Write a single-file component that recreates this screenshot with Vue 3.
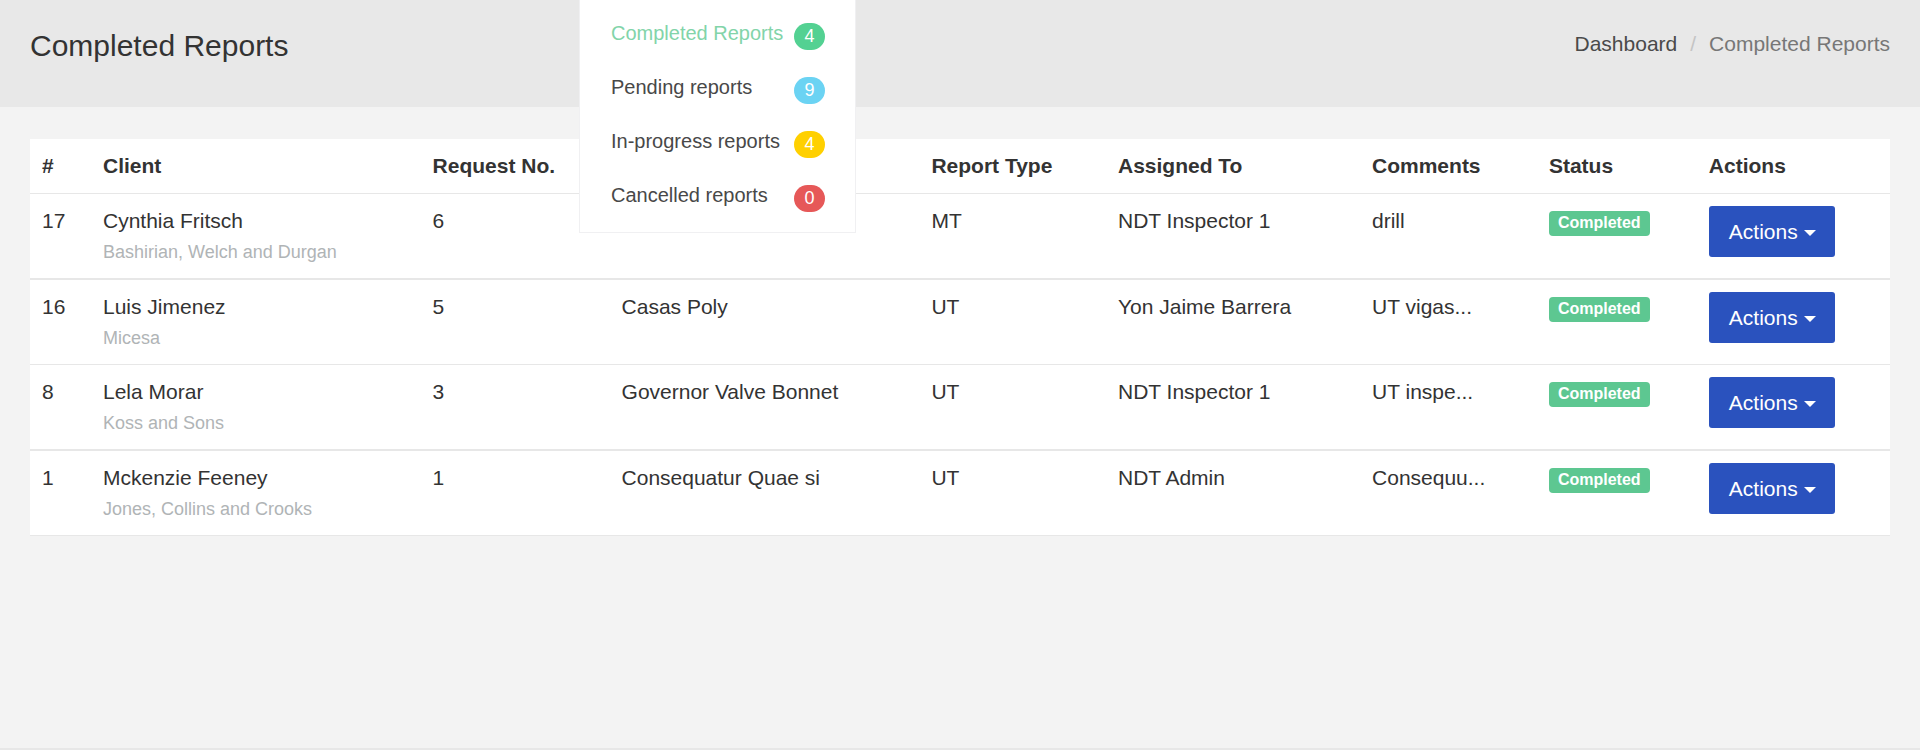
<script setup>
const menu = [
  { label: 'Completed Reports', count: 4, tone: 'green', active: true },
  { label: 'Pending reports', count: 9, tone: 'blue' },
  { label: 'In-progress reports', count: 4, tone: 'yellow' },
  { label: 'Cancelled reports', count: 0, tone: 'red' },
]

const columns = [
  { key: 'id', label: '#' },
  { key: 'client', label: 'Client' },
  { key: 'request', label: 'Request No.' },
  { key: 'project', label: '' },
  { key: 'type', label: 'Report Type' },
  { key: 'assigned', label: 'Assigned To' },
  { key: 'comments', label: 'Comments' },
  { key: 'status', label: 'Status' },
  { key: 'actions', label: 'Actions' },
]

const reports = [
  { id: 17, client: 'Cynthia Fritsch', company: 'Bashirian, Welch and Durgan', request: 6, project: '', type: 'MT', assigned: 'NDT Inspector 1', comments: 'drill' },
  { id: 16, client: 'Luis Jimenez', company: 'Micesa', request: 5, project: 'Casas Poly', type: 'UT', assigned: 'Yon Jaime Barrera', comments: 'UT vigas...' },
  { id: 8, client: 'Lela Morar', company: 'Koss and Sons', request: 3, project: 'Governor Valve Bonnet', type: 'UT', assigned: 'NDT Inspector 1', comments: 'UT inspe...' },
  { id: 1, client: 'Mckenzie Feeney', company: 'Jones, Collins and Crooks', request: 1, project: 'Consequatur Quae si', type: 'UT', assigned: 'NDT Admin', comments: 'Consequu...' },
]
</script>

<template>
  <div class="page">
    <nav class="menu" aria-label="Reports">
      <a v-for="item in menu" :key="item.label" href="#" class="menu-item" :class="{ active: item.active }">
        <span>{{ item.label }}</span>
        <span class="count" :class="item.tone">{{ item.count }}</span>
      </a>
    </nav>

    <header class="page-header">
      <h1>Completed Reports</h1>
      <nav class="breadcrumb" aria-label="Breadcrumb">
        <a href="#">Dashboard</a>
        <span class="slash">/</span>
        <span class="current">Completed Reports</span>
      </nav>
    </header>

    <main>
      <table>
        <colgroup>
          <col v-for="c in columns" :key="c.key" :class="'col-' + c.key" />
        </colgroup>
        <thead>
          <tr>
            <th v-for="c in columns" :key="c.key" scope="col">{{ c.label }}</th>
          </tr>
        </thead>
        <tbody>
          <tr v-for="r in reports" :key="r.id">
            <td>{{ r.id }}</td>
            <td>
              <div>{{ r.client }}</div>
              <div class="company">{{ r.company }}</div>
            </td>
            <td>{{ r.request }}</td>
            <td>{{ r.project }}</td>
            <td>{{ r.type }}</td>
            <td>{{ r.assigned }}</td>
            <td>{{ r.comments }}</td>
            <td class="status-cell"><span class="status">Completed</span></td>
            <td><button type="button" class="action">Actions<span class="caret"></span></button></td>
          </tr>
        </tbody>
      </table>
    </main>

    <footer></footer>
  </div>
</template>

<style>
body {
  background: #f3f3f3;
}
</style>

<style scoped>
.page {
  position: relative;
  box-sizing: border-box;
  min-height: 100vh;
  display: flex;
  flex-direction: column;
  background: #f3f3f3;
  color: #333;
  font: 21px/30px "Liberation Sans", Arial, sans-serif;
}
.page-header {
  display: flex;
  justify-content: space-between;
  align-items: flex-start;
  padding: 29px 30px 44px;
  background: #e8e8e8;
}
h1 {
  margin: 0;
  font-size: 30px;
  line-height: 34px;
  font-weight: 400;
}
.breadcrumb {
  display: flex;
  gap: 13px;
}
.breadcrumb a {
  color: #4a4a4a;
  text-decoration: none;
}
.slash {
  color: #c4c4c4;
}
.current {
  color: #777;
}
.menu {
  position: absolute;
  z-index: 1;
  top: 0;
  left: 579px;
  box-sizing: border-box;
  width: 277px;
  padding: 6px 0 10px;
  background: #fff;
  border: 1px solid #f0f0f2;
  border-top: 0;
}
.menu-item {
  display: flex;
  justify-content: space-between;
  align-items: flex-start;
  padding: 12px 30px 10px 31px;
  color: #484848;
  font-size: 20px;
  text-decoration: none;
}
.menu-item.active {
  color: #82d4a9;
}
.count {
  min-width: 31px;
  margin-top: 5px;
  border-radius: 14px;
  color: #fff;
  font-size: 18px;
  line-height: 27px;
  text-align: center;
}
.green { background: #53d192; }
.blue { background: #6bd3f3; }
.yellow { background: #ffd000; }
.red { background: #e65858; }

main {
  flex: 1;
  padding: 32px 30px;
}
table {
  width: 100%;
  table-layout: fixed;
  border-collapse: separate;
  border-spacing: 0;
  background: #fff;
}
.col-id { width: 3.28%; }
.col-client { width: 17.72%; }
.col-request { width: 10.16%; }
.col-project { width: 16.66%; }
.col-type { width: 10.03%; }
.col-assigned { width: 13.66%; }
.col-comments { width: 9.51%; }
.col-status { width: 8.6%; }

th,
td {
  padding: 12px 0 12px 12px;
  text-align: left;
  vertical-align: top;
  border-bottom: 1px solid #e7e7e7;
}
th {
  height: 30px;
}
td {
  padding-bottom: 10px;
}
tbody tr:nth-child(odd) td {
  border-bottom-width: 2px;
}
.company {
  color: #b0b4b6;
  font-size: 18px;
  line-height: 32px;
}
.status-cell {
  padding-top: 17px;
}
.status {
  display: block;
  width: max-content;
  padding: 0 9px 2px;
  border-radius: 4px;
  background: #5dc791;
  color: #fff;
  font-size: 16px;
  line-height: 23px;
  font-weight: 700;
}
.action {
  display: flex;
  align-items: center;
  gap: 6px;
  padding: 11px 19px 10px 20px;
  border: 0;
  border-radius: 3px;
  background: #2a52be;
  color: #fff;
  font: inherit;
  cursor: pointer;
}
.caret {
  margin-top: 2px;
  border: 6px solid transparent;
  border-top-color: #fff;
  border-bottom: 0;
}
footer {
  border-top: 2px solid #e7e7e7;
}
</style>
